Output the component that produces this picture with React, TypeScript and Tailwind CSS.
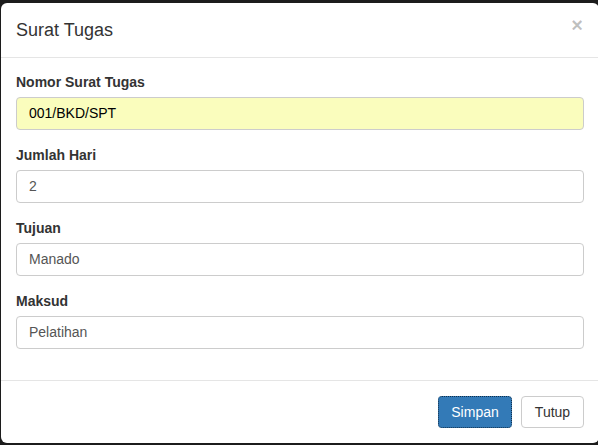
import React from 'react'

interface Field {
    label: string
    value: string
    autofill?: boolean
}

const fields: Field[] = [
    { label: 'Nomor Surat Tugas', value: '001/BKD/SPT', autofill: true },
    { label: 'Jumlah Hari', value: '2' },
    { label: 'Tujuan', value: 'Manado' },
    { label: 'Maksud', value: 'Pelatihan' },
]

export default function App() {
    return (
        <div
            className="w-[598px] h-[445px] overflow-hidden bg-[#1c1c1c] pt-[3px] pl-[1px]"
            style={{ fontFamily: '"Liberation Sans", Arial, sans-serif' }}
        >
            <div className="w-[598px] h-[440px] bg-white rounded-[6px] flex flex-col text-[#333]">
                {/* header */}
                <div className="h-[55px] border-b border-[#e5e5e5] px-[15px] flex items-center justify-between">
                    <h4 className="text-[18px] leading-[26px] text-[#333]">Surat Tugas</h4>
                    <button className="text-[20px] font-bold leading-none text-black/25 -mt-[10px] mr-[1px]">×</button>
                </div>

                {/* body */}
                <div className="px-[15px] pt-[14px] pb-[16px] border-b border-[#e5e5e5]">
                    {fields.map((f) => (
                        <div key={f.label} className="mb-[15px]">
                            <label className="block text-[14px] leading-[20px] font-bold mb-[5px]">{f.label}</label>
                            <div
                                className={
                                    f.autofill
                                        ? 'h-[33px] rounded-[4px] border border-[#ccc] bg-[#fafdbd] px-[12px] flex items-center text-[14px] text-black'
                                        : 'h-[33px] rounded-[4px] border border-[#ccc] bg-white px-[12px] flex items-center text-[14px] text-[#555]'
                                }
                            >
                                {f.value}
                            </div>
                        </div>
                    ))}
                </div>

                {/* footer */}
                <div className="flex justify-end items-center gap-[9px] px-[15px] pt-[15px]">
                    <button className="h-[32px] w-[74px] rounded-[4px] border border-dotted border-[#10304d] bg-[#337ab7] text-white text-[14px]">
                        Simpan
                    </button>
                    <button className="h-[32px] w-[63px] rounded-[4px] border border-[#ccc] bg-white text-[#333] text-[14px]">
                        Tutup
                    </button>
                </div>
            </div>
        </div>
    )
}
